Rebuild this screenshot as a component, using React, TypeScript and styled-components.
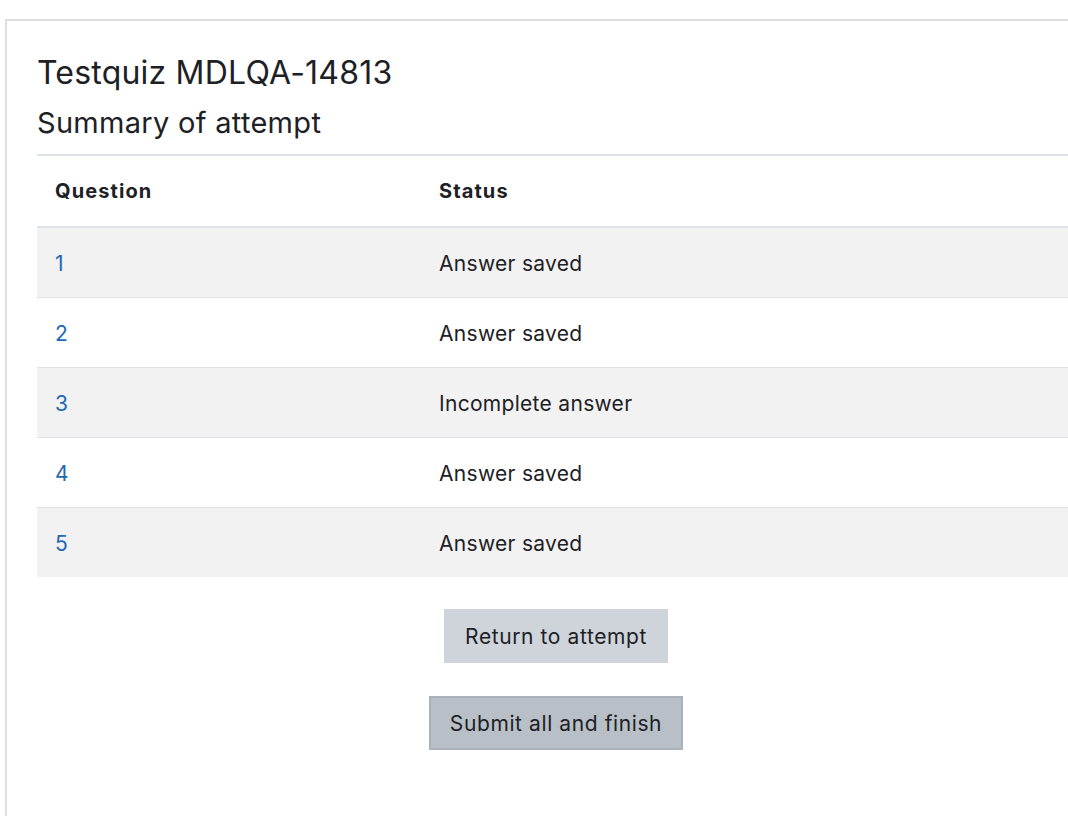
import React from "react";
import styled, { createGlobalStyle } from "styled-components";

const Global = createGlobalStyle`
  html, body {
    margin: 0;
    padding: 0;
    background: #ffffff;
    overflow: hidden;
  }
  body {
    font-family: Inter, "Noto Sans", "Liberation Sans", sans-serif;
    color: #1d2125;
  }
`;

const Card = styled.div`
  box-sizing: border-box;
  margin: 19px 0 0 5px;
  width: 1102px;
  min-height: 800px;
  border: 2px solid #dedede;
  padding: 33px 30px 0 30px;
  background: #fff;
`;

const Title = styled.h2`
  margin: 0;
  font-size: 32px;
  line-height: 38px;
  font-weight: 400;
  color: #1d2125;
  letter-spacing: 0.2px;
`;

const Subtitle = styled.h3`
  margin: 13px 0 0 0;
  font-size: 29px;
  line-height: 35px;
  font-weight: 400;
  color: #1d2125;
  letter-spacing: 0.3px;
`;

const Table = styled.table`
  margin-top: 14px;
  width: 100%;
  table-layout: fixed;
  border-collapse: collapse;
  border-top: 2px solid #dee2e6;
  font-size: 21px;
  letter-spacing: 0.3px;
`;

const HeadCell = styled.th<{ $w?: string }>`
  box-sizing: border-box;
  text-align: left;
  font-weight: 700;
  font-size: 20px;
  letter-spacing: 1.1px;
  height: 72px;
  padding: 0 18px;
  vertical-align: middle;
  border-bottom: 2px solid #dee2e6;
  width: ${(p) => p.$w || "auto"};
`;

const Row = styled.tr<{ $striped: boolean }>`
  background: ${(p) => (p.$striped ? "#f2f2f2" : "#ffffff")};
`;

const Cell = styled.td`
  height: 68px;
  padding: 1px 18px 0 18px;
  vertical-align: middle;
  color: #1d2125;
  border-top: 1px solid #dee2e6;
`;

const QLink = styled.a`
  color: #1f68b5;
  text-decoration: none;
`;

const Actions = styled.div`
  display: flex;
  flex-direction: column;
  align-items: center;
  gap: 33px;
  margin-top: 32px;
`;

const Button = styled.button<{ $primary?: boolean }>`
  box-sizing: border-box;
  height: 54px;
  padding: 0 ${(p) => (p.$primary ? "19px" : "21px")};
  font-family: inherit;
  font-size: 21px;
  letter-spacing: 0.6px;
  color: #1d2125;
  border-radius: 0;
  border: ${(p) => (p.$primary ? "2px solid #a9b1b9" : "none")};
  background: ${(p) => (p.$primary ? "#b8bfc7" : "#ced4da")};
  cursor: pointer;
`;

const rows = [
  { n: 1, s: "Answer saved" },
  { n: 2, s: "Answer saved" },
  { n: 3, s: "Incomplete answer" },
  { n: 4, s: "Answer saved" },
  { n: 5, s: "Answer saved" },
];

export default function App() {
  return (
    <>
      <Global />
      <Card>
        <Title>Testquiz MDLQA-14813</Title>
        <Subtitle>Summary of attempt</Subtitle>
        <Table>
          <thead>
            <tr>
              <HeadCell $w="384px">Question</HeadCell>
              <HeadCell>Status</HeadCell>
            </tr>
          </thead>
          <tbody>
            {rows.map((r, i) => (
              <Row key={r.n} $striped={i % 2 === 0}>
                <Cell>
                  <QLink href="#">{r.n}</QLink>
                </Cell>
                <Cell>{r.s}</Cell>
              </Row>
            ))}
          </tbody>
        </Table>
        <Actions>
          <Button>Return to attempt</Button>
          <Button $primary>Submit all and finish</Button>
        </Actions>
      </Card>
    </>
  );
}
